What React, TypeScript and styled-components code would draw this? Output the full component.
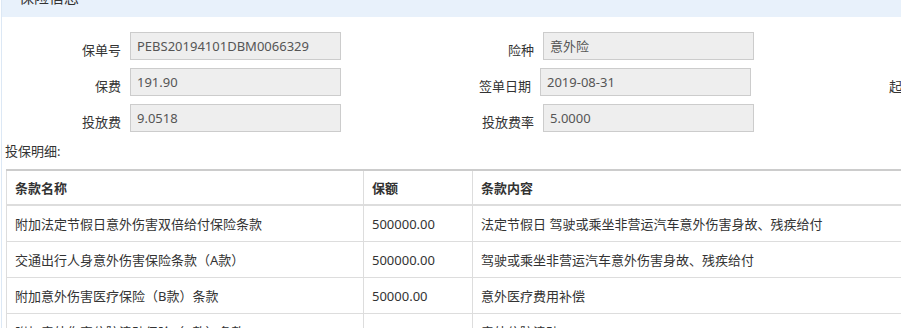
import React from "react";
import styled, {createGlobalStyle} from "styled-components";

interface IField {
  label: string;
  value?: string;
}

interface IClause {
  name: string;
  amount: string;
  content: string;
}

const formRows: IField[][] = [
  [
    {label: "保单号", value: "PEBS20194101DBM0066329"},
    {label: "险种", value: "意外险"},
  ],
  [
    {label: "保费", value: "191.90"},
    {label: "签单日期", value: "2019-08-31"},
    {label: "起保日期", value: "2019-09-01"},
  ],
  [
    {label: "投放费", value: "9.0518"},
    {label: "投放费率", value: "5.0000"},
  ],
];

const clauses: IClause[] = [
  {
    name: "附加法定节假日意外伤害双倍给付保险条款",
    amount: "500000.00",
    content: "法定节假日 驾驶或乘坐非营运汽车意外伤害身故、残疾给付",
  },
  {
    name: "交通出行人身意外伤害保险条款（A款）",
    amount: "500000.00",
    content: "驾驶或乘坐非营运汽车意外伤害身故、残疾给付",
  },
  {
    name: "附加意外伤害医疗保险（B款）条款",
    amount: "50000.00",
    content: "意外医疗费用补偿",
  },
  {
    name: "附加意外伤害住院津贴保险（B款）条款",
    amount: "15000.00",
    content: "意外住院津贴",
  },
];

function App() {
  return (
    <>
      <GlobalStyle />
      <Page>
        <Panel>
          <PanelHeader>保险信息</PanelHeader>
          <PanelBody>
            <Form>
              {formRows.map((row, i) => (
                <FormRow key={i}>
                  {row.map((f) => (
                    <Field key={f.label}>
                      <Label>{f.label}</Label>
                      <Value>{f.value}</Value>
                    </Field>
                  ))}
                </FormRow>
              ))}
            </Form>
            <DetailTitle>投保明细:</DetailTitle>
            <Table>
              <colgroup>
                <col style={{width: 357}} />
                <col style={{width: 109}} />
                <col />
              </colgroup>
              <thead>
                <tr>
                  <Th>条款名称</Th>
                  <Th>保额</Th>
                  <Th>条款内容</Th>
                </tr>
              </thead>
              <tbody>
                {clauses.map((c) => (
                  <tr key={c.name}>
                    <Td>{c.name}</Td>
                    <Td>{c.amount}</Td>
                    <Td>{c.content}</Td>
                  </tr>
                ))}
              </tbody>
            </Table>
          </PanelBody>
        </Panel>
      </Page>
    </>
  );
}

const GlobalStyle = createGlobalStyle`
  html, body {
    margin: 0;
    padding: 0;
    overflow: hidden;
    background: #fff;
  }
  body {
    font-family: "Noto Sans", "Noto Sans CJK SC", sans-serif;
    font-size: 13px;
    color: #333;
  }
`;
const Page = styled.div`
  width: 1240px;
  margin-top: -23px;
`;
const Panel = styled.div`
  margin-left: 1px;
  border: 1px solid #dce8f5;
  border-top: none;
  background: #fff;
`;
const PanelHeader = styled.div`
  height: 40px;
  line-height: 40px;
  padding-left: 17px;
  background-color: #e8f1fb;
  font-size: 15px;
  color: #333;
`;
const PanelBody = styled.div`
  padding: 15px 4px 20px 3px;
`;
const Form = styled.div`
  display: flex;
  flex-direction: column;
  gap: 8px;
`;
const FormRow = styled.div`
  display: flex;
`;
const Field = styled.div`
  display: flex;
  align-items: center;
  width: 413px;
`;
const Label = styled.div`
  width: 116px;
  margin-right: 9px;
  padding-top: 6px;
  text-align: right;
  color: #333;
  white-space: nowrap;
`;
const Value = styled.div`
  box-sizing: border-box;
  width: 211px;
  height: 28px;
  line-height: 26px;
  padding: 0 6px;
  border: 1px solid #ccc;
  background-color: #eee;
  color: #555;
  white-space: nowrap;
  overflow: hidden;
`;
const DetailTitle = styled.div`
  margin-top: 9px;
  line-height: 20px;
  color: #333;
`;
const Table = styled.table`
  width: calc(100% - 1px);
  margin: 8px 0 0 1px;
  border-collapse: collapse;
  table-layout: fixed;
  border-top: 2px solid #ccc;
  border-left: 1px solid #ddd;
`;
const Th = styled.th`
  height: 33px;
  padding: 0 8px;
  text-align: left;
  font-weight: bold;
  color: #333;
  border-right: 1px solid #ddd;
  border-bottom: 2px solid #ddd;
`;
const Td = styled.td`
  height: 35px;
  padding: 0 8px;
  color: #333;
  white-space: nowrap;
  border-right: 1px solid #ddd;
  border-bottom: 1px solid #ddd;
`;

export default App;
